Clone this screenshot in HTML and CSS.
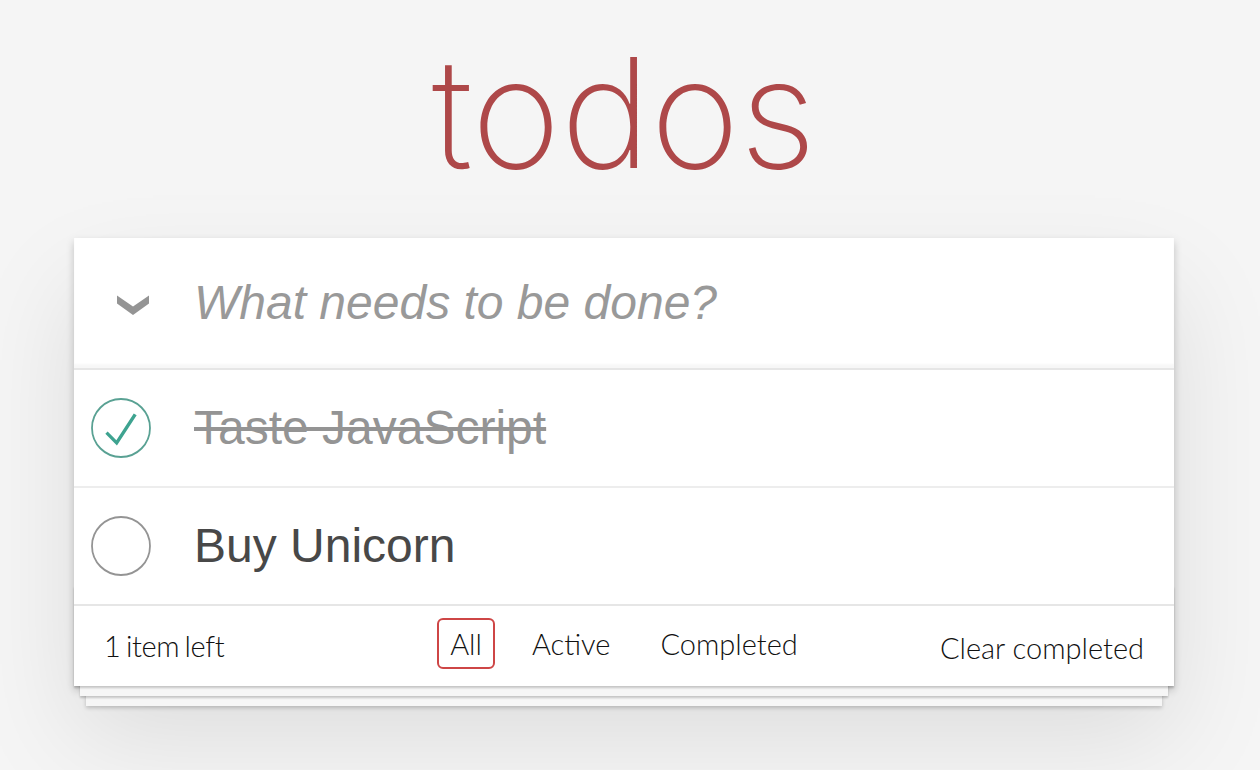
FILE: index.html
```html
<!DOCTYPE html>
<html lang="en">
<head>
<meta charset="utf-8">
<title>todos</title>
<link rel="stylesheet" href="styles.css">
</head>
<body>
<div class="page">
  <h1 class="title">todos</h1>
  <section class="todoapp">
    <header class="new-row">
      <span class="toggle-all">
        <svg width="32" height="20" viewBox="0 0 32 20"><polygon points="0,0.5 16,11.5 32,0.5 32,8.5 16,20 0,8.5" fill="#949494"/></svg>
      </span>
      <span class="new-todo">What needs to be done?</span>
    </header>
    <ul class="todo-list">
      <li class="todo done">
        <span class="check">
          <svg width="60" height="60" viewBox="0 0 60 60">
            <circle cx="30" cy="30" r="29" fill="none" stroke="#59a193" stroke-width="1.8"/>
            <g transform="translate(30 30) scale(0.58) translate(-50 -50)"><path fill="#3ea390" d="M72 25L42 71 27 56l-4 4 20 20 34-52z"/></g>
          </svg>
        </span>
        <span class="label">Taste JavaScript</span>
      </li>
      <li class="todo">
        <span class="check">
          <svg width="60" height="60" viewBox="0 0 60 60">
            <circle cx="30" cy="30" r="29" fill="none" stroke="#949494" stroke-width="1.8"/>
          </svg>
        </span>
        <span class="label">Buy Unicorn</span>
      </li>
    </ul>
    <footer class="footer">
      <span class="count">1 item left</span>
      <ul class="filters">
        <li><a class="filter selected" href="#/">All</a></li>
        <li><a class="filter" href="#/active">Active</a></li>
        <li><a class="filter" href="#/completed">Completed</a></li>
      </ul>
      <span class="clear">Clear completed</span>
    </footer>
  </section>
</div>
</body>
</html>
```

FILE: styles.css
```css
html, body {
  margin: 0;
  padding: 0;
}

body {
  min-height: 100vh;
  background: #f5f5f5;
  font-family: "Liberation Sans", Arial, sans-serif;
  color: #111;
  padding-right: 12px;
}

.page {
  width: 1100px;
  margin: 0 auto;
  padding-bottom: 80px;
}

.title {
  margin: 0 0 49px;
  padding-top: 37px;
  font-family: "Inter", "Roboto", sans-serif;
  font-size: 152px;
  font-weight: 200;
  line-height: 152px;
  text-align: center;
  color: #ae4849;
}

.todoapp {
  background: #fff;
  box-shadow: 0 4px 8px 0 rgba(0, 0, 0, 0.2), 0 50px 100px 0 rgba(0, 0, 0, 0.1);
}

.new-row {
  display: flex;
  align-items: center;
  height: 130px;
  border-bottom: 2px solid #e6e6e6;
  box-shadow: inset 0 -4px 2px rgba(0, 0, 0, 0.03);
}

.toggle-all {
  width: 120px;
  display: flex;
  justify-content: center;
  padding-top: 4px;
  padding-right: 2px;
  box-sizing: border-box;
}

.toggle-all svg {
  display: block;
}

.new-todo {
  font-size: 48px;
  line-height: 66px;
  font-style: italic;
  color: #999;
}

.todo-list {
  list-style: none;
  margin: 0;
  padding: 0;
}

.todo {
  display: flex;
  align-items: center;
  border-bottom: 2px solid #ededed;
}

.todo:last-child {
  border-bottom: none;
}

.check {
  width: 120px;
  flex: none;
  display: flex;
  align-items: center;
}

.check svg {
  display: block;
  margin-left: 17px;
}

.label {
  padding: 30px 0;
  font-size: 48px;
  line-height: 56px;
  color: #484848;
}

.done .label {
  color: #949494;
  text-decoration: line-through;
}

.footer {
  position: relative;
  display: grid;
  grid-template-columns: 1fr auto 1fr;
  grid-template-rows: 40px;
  height: 40px;
  padding: 20px 30px;
  border-top: 2px solid #e6e6e6;
  font-family: "Lato", "Roboto", sans-serif;
  font-weight: 300;
  font-size: 29px;
  color: #111;
}

.footer::before {
  content: "";
  position: absolute;
  right: 0;
  bottom: 0;
  left: 0;
  height: 100px;
  overflow: hidden;
  pointer-events: none;
  box-shadow: 0 2px 2px rgba(0, 0, 0, 0.2),
    0 16px 0 -6px #f6f6f6,
    0 18px 2px -6px rgba(0, 0, 0, 0.2),
    0 32px 0 -12px #f6f6f6,
    0 34px 4px -12px rgba(0, 0, 0, 0.2);
}

.count {
  justify-self: start;
  align-self: start;
  line-height: 40px;
  letter-spacing: -0.4px;
  word-spacing: -2px;
}

.filters {
  display: flex;
  gap: 24px;
  list-style: none;
  align-self: start;
  margin: -8px 0 0;
  padding: 0;
}

.filter {
  display: block;
  padding: 6px 11px;
  line-height: 35px;
  border: 2px solid transparent;
  border-radius: 6px;
  color: inherit;
  text-decoration: none;
}

.filter.selected {
  border-color: #ce4646;
}

.clear {
  justify-self: end;
  align-self: start;
  line-height: 44px;
}
```
